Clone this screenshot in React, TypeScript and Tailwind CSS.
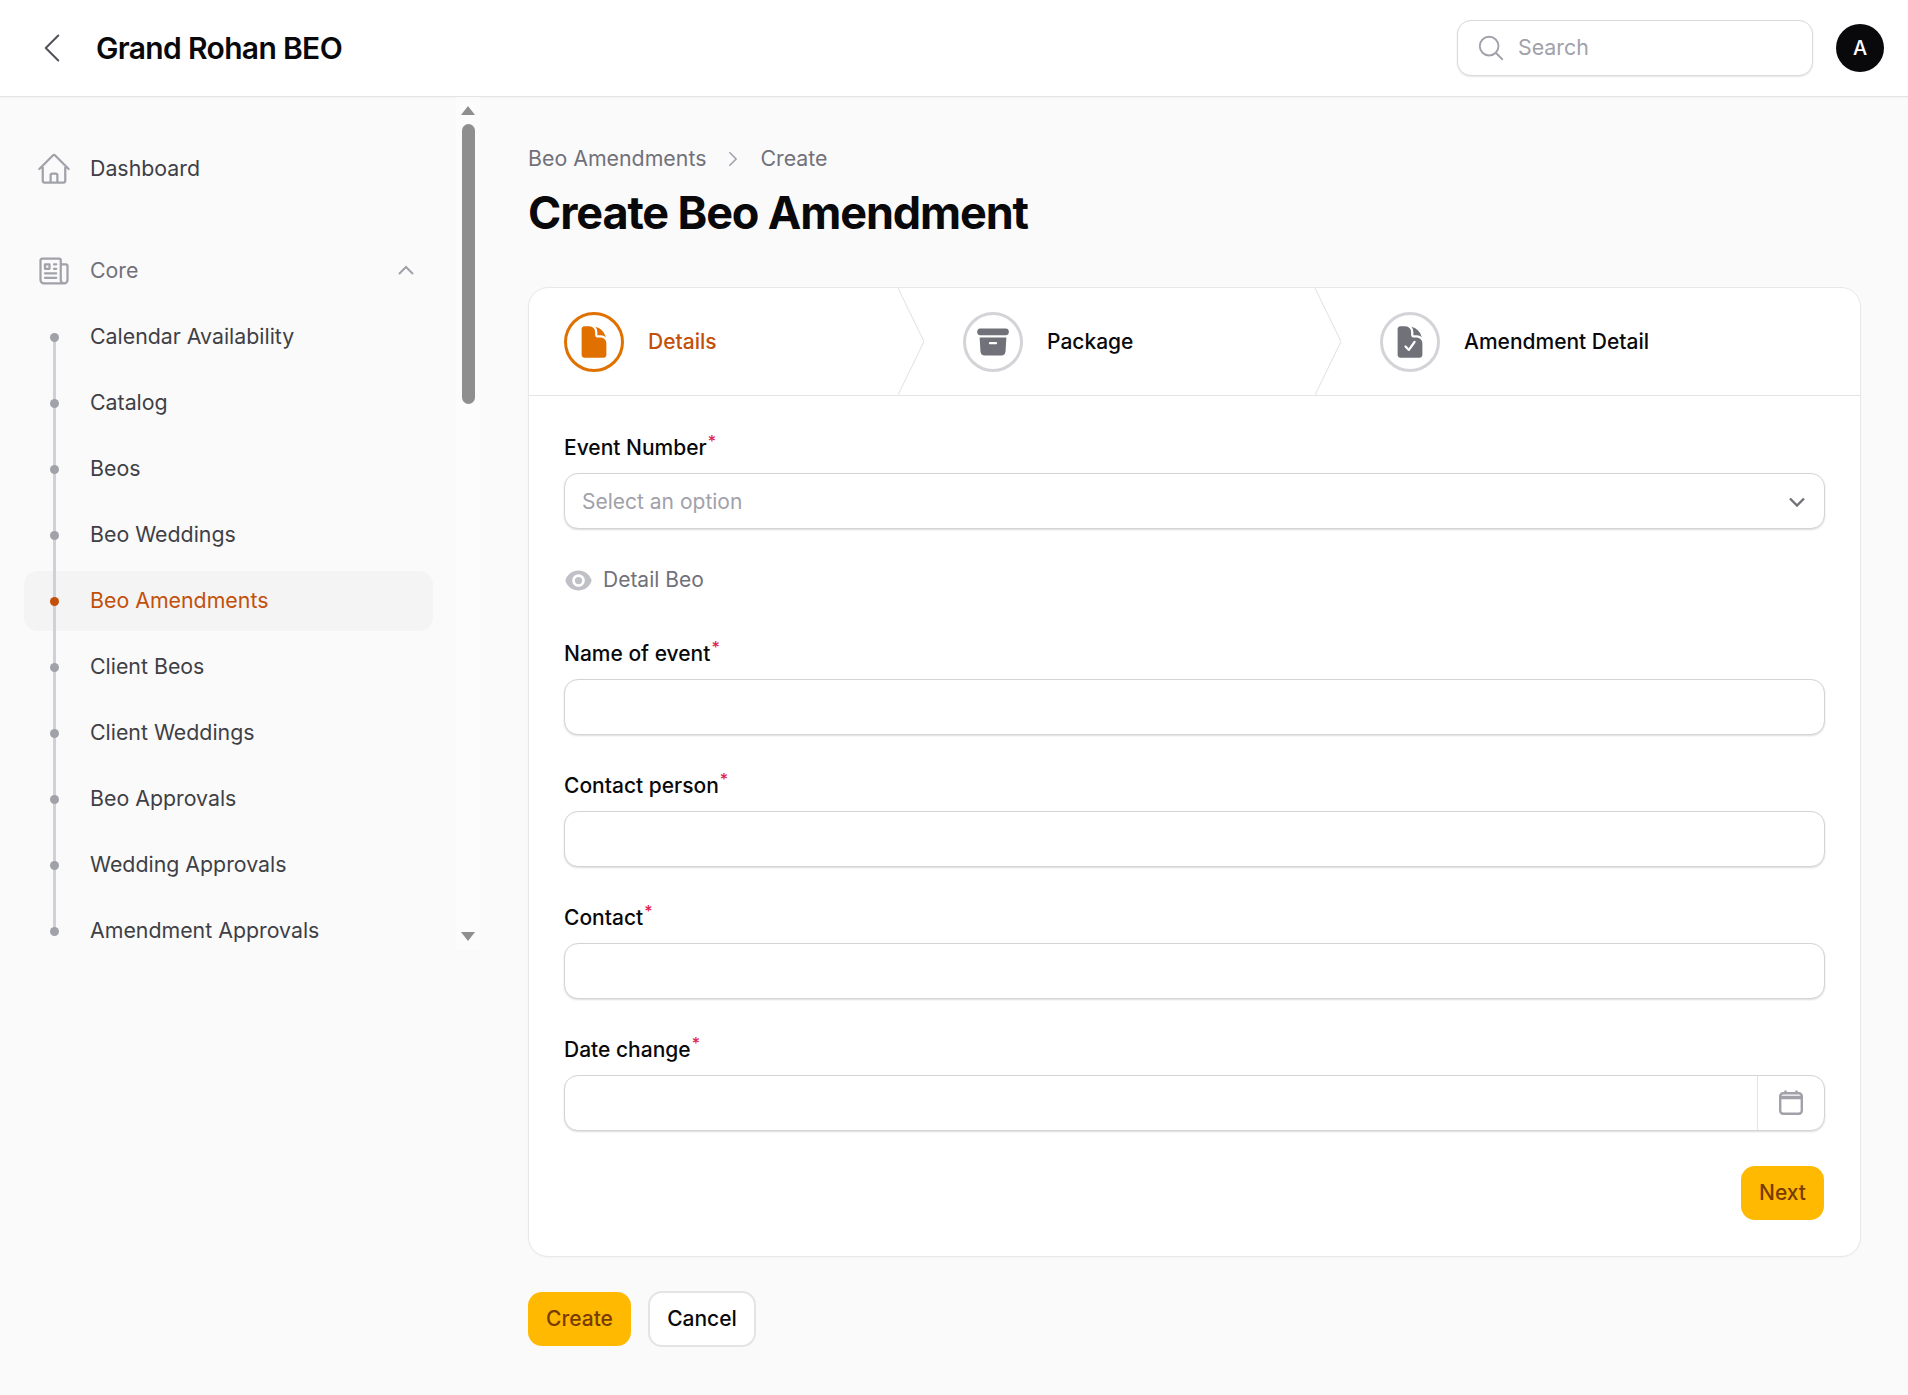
import {
  HiArchiveBox,
  HiDocument,
  HiDocumentCheck,
  HiEye,
  HiOutlineChevronLeft,
  HiOutlineChevronRight,
  HiOutlineHome,
  HiOutlineMagnifyingGlass,
  HiOutlineNewspaper,
} from "react-icons/hi2";

const navItems = [
  "Calendar Availability",
  "Catalog",
  "Beos",
  "Beo Weddings",
  "Beo Amendments",
  "Client Beos",
  "Client Weddings",
  "Beo Approvals",
  "Wedding Approvals",
  "Amendment Approvals",
];

function Topbar() {
  return (
    <header className="flex h-[97px] items-center border-b border-[#e4e4e7] bg-white pl-[32px] pr-[24px] shadow-[0_1px_2px_rgba(0,0,0,0.04)]">
      <HiOutlineChevronLeft className="size-[40px] stroke-[1.2] text-[#52525b]" />
      <h1 className="ml-[24px] text-[30px] font-semibold leading-none tracking-[-0.022em] text-[#09090b]">
        Grand Rohan BEO
      </h1>
      <div className="ml-auto flex h-[56px] w-[356px] items-center rounded-[14px] border border-[#d9d9de] bg-white pl-[18px] shadow-[0_1px_2px_rgba(0,0,0,0.1)]">
        <HiOutlineMagnifyingGlass className="size-[30px] text-[#a1a1aa]" />
        <span className="ml-[12px] text-[21.33px] text-[#a1a1aa]">Search</span>
      </div>
      <div className="ml-[23px] flex size-[48px] items-center justify-center rounded-full bg-[#09090b] text-[20px] font-medium text-white">
        A
      </div>
    </header>
  );
}

function Scrollbar() {
  return (
    <div className="flex h-[852px] w-[24px] flex-col items-center bg-[#fcfcfc] pt-[9px]">
      <div className="h-0 w-0 border-x-[7px] border-b-[9px] border-x-transparent border-b-[#8f8f8f]" />
      <div className="mt-[9px] h-[280px] w-[13px] rounded-full bg-[#8f8f8f]" />
      <div className="mt-auto mb-[8px] h-0 w-0 border-x-[7px] border-t-[9px] border-x-transparent border-t-[#8f8f8f]" />
    </div>
  );
}

function Sidebar() {
  return (
    <aside className="flex w-[480px] shrink-0 items-start">
      <nav className="w-[456px] pl-[24px] pr-[23px] pt-[42px]">
        <div className="flex h-[60px] items-center gap-[18px] pl-[12px]">
          <HiOutlineHome className="size-[36px] text-[#a1a1aa]" />
          <span className="text-[21.33px] text-[#3f3f46]">Dashboard</span>
        </div>
        <div className="mt-[42px] flex h-[60px] items-center gap-[18px] pl-[12px] pr-[19px]">
          <HiOutlineNewspaper className="size-[36px] text-[#a1a1aa]" />
          <span className="text-[21.33px] text-[#71717a]">Core</span>
          <svg viewBox="0 0 16 10" fill="none" className="ml-auto mb-[2px] h-[10px] w-[16px] text-[#a1a1aa]">
            <path d="M1 9 L8 2 L15 9" stroke="currentColor" strokeWidth="2" />
          </svg>
        </div>
        <ul className="mt-[6px] flex flex-col gap-[6px]">
          {navItems.map((item, i) => {
            const active = item === "Beo Amendments";
            return (
              <li
                key={item}
                className={`relative flex h-[60px] items-center rounded-[14px] pl-[66px] text-[21.33px] ${
                  active ? "bg-[#f4f4f5] text-[#c2500a]" : "text-[#3f3f46]"
                }`}
              >
                <span
                  className={`absolute left-[29px] w-[3px] bg-[#d0d0d7] ${
                    i === 0
                      ? "top-1/2 bottom-[-6px]"
                      : i === navItems.length - 1
                        ? "top-0 bottom-1/2"
                        : "top-[-6px] bottom-[-6px]"
                  }`}
                />
                <span
                  className={`absolute left-[26px] top-[26px] size-[9px] rounded-full ${
                    active ? "bg-[#c2500a]" : "bg-[#a1a1aa]"
                  }`}
                />
                {item}
              </li>
            );
          })}
        </ul>
      </nav>
      <Scrollbar />
    </aside>
  );
}

function StepChevron() {
  return (
    <svg
      viewBox="0 0 25 108"
      preserveAspectRatio="none"
      fill="none"
      className="absolute right-[4px] top-0 h-full w-[26px]"
    >
      <path d="M0 0 L25 54 L0 108" stroke="#e4e4e7" strokeWidth="1" />
    </svg>
  );
}

function Step({
  label,
  active,
  last,
  children,
}: {
  label: string;
  active?: boolean;
  last?: boolean;
  children: React.ReactNode;
}) {
  return (
    <div className="relative flex items-center gap-[24px] pl-[35px]">
      <div
        className={`flex size-[60px] items-center justify-center rounded-full border-[3px] ${
          active ? "border-[#e07000] text-[#e07000]" : "border-[#d4d4d8] text-[#71717a]"
        }`}
      >
        {children}
      </div>
      <span
        className={`text-[21px] font-medium ${active ? "text-[#c2500a]" : "text-[#09090b]"}`}
      >
        {label}
      </span>
      {!last && <StepChevron />}
    </div>
  );
}

function Label({ children }: { children: React.ReactNode }) {
  return (
    <div className="mb-[13px] h-[24px] text-[21px] font-medium leading-[24px] text-[#09090b]">
      {children}
      <sup className="ml-[1px] text-[16px] font-medium text-[#e11d48]">*</sup>
    </div>
  );
}

const boxClass =
  "h-[56px] rounded-[14px] border border-[#d4d4d8] bg-white shadow-[0_1px_2px_rgba(0,0,0,0.14)]";

function TextField({ label }: { label: string }) {
  return (
    <div>
      <Label>{label}</Label>
      <div className={boxClass} />
    </div>
  );
}

export default function App() {
  return (
    <div className="min-h-[1395px] bg-[#fafafa] font-['Inter',sans-serif]">
      <Topbar />
      <div className="flex">
        <Sidebar />
        <main className="w-[1333px] pl-[48px] pt-[47px]">
          <div className="flex h-[30px] items-center text-[21.33px] text-[#71717a]">
            <span>Beo Amendments</span>
            <HiOutlineChevronRight className="mx-[17px] size-[20px] stroke-[2] text-[#a1a1aa]" />
            <span>Create</span>
          </div>
          <h2 className="mt-[12px] text-[45px] font-bold leading-[54px] tracking-[-0.025em] text-[#09090b]">
            Create Beo Amendment
          </h2>
          <section className="mt-[47px] w-[1333px] overflow-hidden rounded-[20px] border border-[#e8e8ea] bg-white shadow-[0_1px_2px_rgba(0,0,0,0.03)]">
            <div className="grid h-[108px] grid-cols-[399px_417px_1fr] border-b border-[#e4e4e7]">
              <Step label="Details" active>
                <HiDocument className="size-[36px]" />
              </Step>
              <Step label="Package">
                <HiArchiveBox className="size-[36px]" />
              </Step>
              <Step label="Amendment Detail" last>
                <HiDocumentCheck className="size-[36px]" />
              </Step>
            </div>
            <div className="px-[35px] pb-[36px] pt-[40px]">
              <Label>Event Number</Label>
              <div className={`${boxClass} flex items-center justify-between pl-[17px] pr-[19px] pt-[1px]`}>
                <span className="text-[21px] text-[#a1a1aa]">Select an option</span>
                <svg viewBox="0 0 16 10" fill="none" className="h-[10px] w-[16px] text-[#71717a]">
                  <path d="M1 1.5 L8 8.5 L15 1.5" stroke="currentColor" strokeWidth="2.4" />
                </svg>
              </div>
              <div className="mt-[39px] flex h-[24px] items-center gap-[10px]">
                <HiEye className="size-[29px] text-[#c0c0c7]" />
                <span className="text-[21px] text-[#71717a]">Detail Beo</span>
              </div>
              <div className="mt-[50px] flex flex-col gap-[39px]">
                <TextField label="Name of event" />
                <TextField label="Contact person" />
                <TextField label="Contact" />
                <div>
                  <Label>Date change</Label>
                  <div className={`${boxClass} flex justify-end`}>
                    <div className="flex w-[67px] items-center justify-center border-l border-[#e4e4e7] pr-[1px]">
                      <svg viewBox="0 0 30 30" fill="none" className="size-[30px] text-[#a1a1aa]">
                        <rect x="4.2" y="5.2" width="21.6" height="20.6" rx="3" stroke="currentColor" strokeWidth="2.4" />
                        <path d="M4.2 9.5 H25.8" stroke="currentColor" strokeWidth="3.4" />
                        <path d="M9.5 2.5 V6 M20.5 2.5 V6" stroke="currentColor" strokeWidth="2.4" />
                      </svg>
                    </div>
                  </div>
                </div>
              </div>
              <div className="mt-[35px] flex justify-end pr-[1px]">
                <button className="flex h-[54px] w-[83px] items-center justify-center rounded-[14px] bg-[#ffb900] text-[21px] font-medium text-[#783c00]">
                  Next
                </button>
              </div>
            </div>
          </section>
          <div className="mt-[34px] flex items-center gap-[17px]">
            <button className="flex h-[54px] w-[103px] items-center justify-center rounded-[14px] bg-[#ffb900] text-[21px] font-medium text-[#783c00]">
              Create
            </button>
            <button className="flex h-[56px] w-[108px] items-center justify-center rounded-[14px] border-2 border-[#e4e4e7] bg-white text-[21px] font-medium text-[#09090b]">
              Cancel
            </button>
          </div>
        </main>
      </div>
    </div>
  );
}
